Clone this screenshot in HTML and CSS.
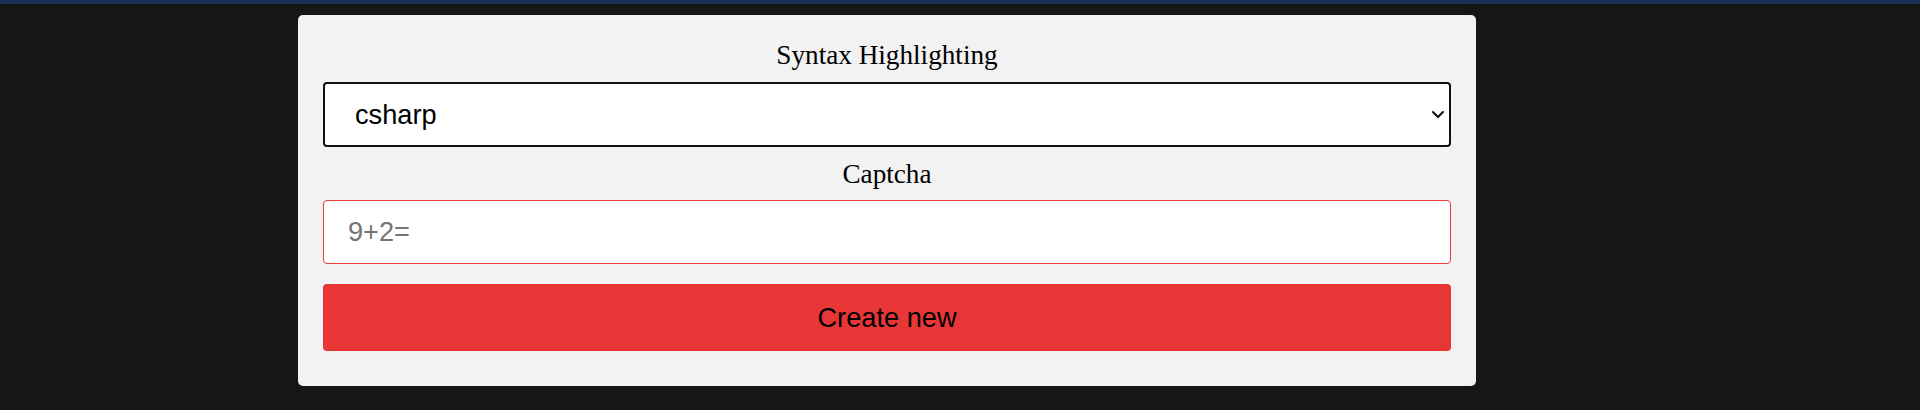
FILE: index.html
```html
<!DOCTYPE html>
<html lang="en">
<head>
<meta charset="utf-8">
<title>New paste</title>
<link rel="stylesheet" href="styles.css">
</head>
<body>
<div class="topbar"></div>
<main class="page">
  <form class="card">
    <label class="field-label" for="lang">Syntax Highlighting</label>
    <div class="select-wrap">
      <select class="select" id="lang">
        <option>csharp</option>
      </select>
      <svg class="select-arrow" width="12" height="8" viewBox="0 0 12 8" aria-hidden="true">
        <path d="M1.2 1.2 L6 6 L10.8 1.2" fill="none" stroke="#111" stroke-width="2.2" stroke-linecap="square"/>
      </svg>
    </div>
    <label class="field-label field-label--second" for="captcha">Captcha</label>
    <input class="text-input" id="captcha" type="text" placeholder="9+2=">
    <button class="submit" type="button">Create new</button>
  </form>
</main>
</body>
</html>
```
FILE: styles.css
```css
html, body {
  margin: 0;
  padding: 0;
}
body {
  background: #151716;
  height: 410px;
  overflow: hidden;
  font-family: "Liberation Serif", "Times New Roman", serif;
}
.topbar {
  height: 4px;
  background: #1a3056;
}
.page {
  padding: 11px 0 0 298px;
}
.card {
  width: 1178px;
  box-sizing: border-box;
  background: #f2f2f2;
  border-radius: 5px;
  padding: 25px 25px 35px;
  display: flex;
  flex-direction: column;
}
.field-label {
  display: block;
  text-align: center;
  font-family: "Liberation Serif", "Times New Roman", serif;
  font-size: 27.2px;
  line-height: 30px;
  height: 30px;
  color: #000;
  margin: 0 0 12px;
}
.field-label--second {
  margin: 12px 0 11px;
}
.select-wrap {
  position: relative;
  display: flex;
}
.select {
  flex: 1;
  -webkit-appearance: none;
  appearance: none;
  height: 65px;
  box-sizing: border-box;
  border: 2px solid #101010;
  border-radius: 4px;
  background-color: #fff;
  color: #000;
  font-family: "Liberation Sans", Arial, sans-serif;
  font-size: 27.2px;
  padding: 0 30px 0 30px;
  margin: 0;
  outline: none;
}
.select-arrow {
  position: absolute;
  right: 7px;
  top: 29px;
  pointer-events: none;
}
.text-input {
  height: 64px;
  box-sizing: border-box;
  border: 1px solid #e83a3a;
  border-radius: 4px;
  background: #fff;
  font-family: "Liberation Sans", Arial, sans-serif;
  font-size: 27.2px;
  padding: 0 24px;
  margin: 0 0 20px;
  outline: none;
}
.text-input::placeholder {
  color: #757575;
}
.submit {
  height: 67px;
  border: none;
  border-radius: 4px;
  background: #e83636;
  color: #000;
  font-family: "Liberation Sans", Arial, sans-serif;
  font-size: 27.2px;
  padding: 0;
  margin: 0;
}
```
